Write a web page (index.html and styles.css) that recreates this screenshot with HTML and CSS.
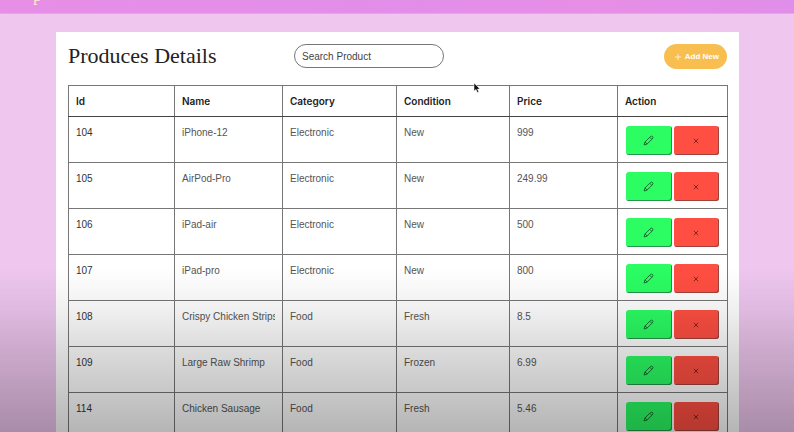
FILE: index.html
```html
<!DOCTYPE html>
<html lang="en">
<head>
    <meta charset="UTF-8">
    <meta name="viewport" content="width=device-width, initial-scale=1.0">
    <title>Produces Details</title>
    <link rel="stylesheet" href="styles.css">
</head>
<body>

    <!-- Icons used by the row buttons -->
    <svg class="sprite" aria-hidden="true">
        <symbol id="icon-pencil" viewBox="0 0 12 12">
            <path d="M1.2 10.9 L2 7.8 L7.9 1.9 Q9.2 0.6 10.4 1.7 Q11.4 2.9 10.2 4.2 L4.3 10 Z M2 7.8 Q3.7 8.1 4.3 10 M7.4 2.5 L9.6 4.7"/>
        </symbol>
        <symbol id="icon-cross" viewBox="0 0 6 6">
            <path d="M0.8 0.8 L5.2 5.2 M5.2 0.8 L0.8 5.2"/>
        </symbol>
    </svg>

    <header class="header">
        <a href="#" class="logo">p</a>
    </header>

    <main class="products">
        <div class="toolbar">
            <h1 class="title">Produces Details</h1>
            <input class="search" type="search" placeholder="Search Product" aria-label="Search Product">
            <button class="add-btn" type="button">
                <svg class="plus" viewBox="0 0 6 6" aria-hidden="true"><path d="M3 0 V6 M0 3 H6"/></svg>
                Add New
            </button>
        </div>

        <table class="product-table">
            <colgroup>
                <col class="col-id">
                <col class="col-name">
                <col class="col-category">
                <col class="col-condition">
                <col class="col-price">
                <col class="col-action">
            </colgroup>
            <thead>
                <tr>
                    <th>Id</th>
                    <th>Name</th>
                    <th>Category</th>
                    <th>Condition</th>
                    <th>Price</th>
                    <th>Action</th>
                </tr>
            </thead>
            <tbody id="product-rows"></tbody>
        </table>
    </main>

    <div class="shade"></div>

    <svg class="pointer" viewBox="0 0 8 12" aria-hidden="true">
        <path d="M1 1 V9 L3 7.4 L4.4 10.6 L5.8 10 L4.5 7 H7 Z"/>
    </svg>

    <script>
        const products = [
            { id: 104, name: "iPhone-12", category: "Electronic", condition: "New", price: 999 },
            { id: 105, name: "AirPod-Pro", category: "Electronic", condition: "New", price: 249.99 },
            { id: 106, name: "iPad-air", category: "Electronic", condition: "New", price: 500 },
            { id: 107, name: "iPad-pro", category: "Electronic", condition: "New", price: 800 },
            { id: 108, name: "Crispy Chicken Strips", category: "Food", condition: "Fresh", price: 8.5 },
            { id: 109, name: "Large Raw Shrimp", category: "Food", condition: "Frozen", price: 6.99 },
            { id: 114, name: "Chicken Sausage", category: "Food", condition: "Fresh", price: 5.46 }
        ];

        function loadProducts() {
            const rows = document.getElementById("product-rows");
            products.forEach((item) => {
                const row = document.createElement("tr");
                row.innerHTML = `
                    <td class="id">${item.id}</td>
                    <td><div class="clip">${item.name}</div></td>
                    <td>${item.category}</td>
                    <td>${item.condition}</td>
                    <td>${item.price}</td>
                    <td class="action">
                        <div class="actions">
                            <button class="btn edit" type="button" aria-label="Edit ${item.name}"><svg class="pencil"><use href="#icon-pencil"/></svg></button>
                            <button class="btn delete" type="button" aria-label="Delete ${item.name}"><svg class="cross"><use href="#icon-cross"/></svg></button>
                        </div>
                    </td>`;
                rows.appendChild(row);
            });
        }

        loadProducts();
    </script>

</body>
</html>
```
FILE: styles.css
```css
/* General Styles */
* {
    box-sizing: border-box;
}

body {
    margin: 0;
    height: 100vh;
    overflow: hidden;
    font-family: "Liberation Sans", Arial, sans-serif;
    font-size: 10px;
    line-height: 12px;
    color: #555;
    background: #eec6ee;
}

button, input {
    font: inherit;
}

.sprite {
    display: none;
}

/* Header */
.header {
    display: flex;
    align-items: flex-end;
    height: 14px;
    padding: 0 33px;
    overflow: hidden;
    background: linear-gradient(to right, #e78ee6, #e28eea 50%, #e78ee6 75%, #e08eea);
    border-bottom: 1px solid #e9a4e9;
}

.logo {
    margin-bottom: 9px;
    font-family: "Liberation Serif", serif;
    font-size: 18px;
    line-height: 18px;
    color: #fbe6cf;
    text-decoration: none;
}

/* Products Card */
.products {
    margin: 18px 55px 0 56px;
    padding: 12px 12px 40px;
    background: white;
}

.toolbar {
    display: grid;
    grid-template-columns: 226px 150px 1fr;
    align-items: start;
    height: 25px;
    margin-bottom: 16px;
}

.title {
    margin: 0;
    font-family: "Liberation Serif", serif;
    font-size: 22px;
    line-height: 24px;
    font-weight: normal;
    color: #222;
}

.search {
    width: 100%;
    height: 24px;
    padding: 0 7px;
    border: 1px solid #777;
    border-radius: 12px;
    background: white;
    appearance: none;
}

.search::placeholder {
    color: #444;
    opacity: 1;
}

.add-btn {
    display: flex;
    align-items: center;
    justify-self: end;
    gap: 4px;
    height: 25px;
    padding: 0 8px 0 11px;
    border: none;
    border-radius: 13px;
    font-size: 8px;
    font-weight: bold;
    color: white;
    background: #f8bf50;
    cursor: pointer;
}

.plus {
    width: 6px;
    height: 6px;
    stroke: white;
    stroke-width: 0.7;
}

/* Product Table */
.product-table {
    width: 100%;
    table-layout: fixed;
    border-collapse: collapse;
}

.col-id { width: 106px; }
.col-name { width: 108px; }
.col-category { width: 114px; }
.col-condition { width: 113px; }
.col-price { width: 108px; }
.col-action { width: 110px; }

.product-table th,
.product-table td {
    padding: 10px 7px;
    border: 1px solid #777;
    text-align: left;
    vertical-align: top;
}

.product-table th {
    height: 30px;
    padding: 9px 7px;
    border-bottom-color: #444;
    font-family: Inter, sans-serif;
    font-weight: 600;
    color: #222;
}

.product-table td {
    height: 46px;
}

.product-table .id {
    color: #333;
}

.product-table .action {
    padding: 9px 8px 7px;
}

.clip {
    overflow: hidden;
    white-space: nowrap;
}

/* Buttons */
.actions {
    display: grid;
    grid-template-columns: 1fr 1fr;
    gap: 2px;
}

.btn {
    display: flex;
    align-items: center;
    justify-content: center;
    height: 29px;
    padding: 0;
    border: none;
    border-radius: 3px;
    cursor: pointer;
}

.edit {
    background: #2bfd63;
    box-shadow: inset -1px -1px 0 #26964a;
}

.delete {
    background: #ff4f42;
    box-shadow: inset -1px -1px 0 #a0423c;
}

.pencil {
    width: 11px;
    height: 11px;
    fill: none;
    stroke: #17552a;
    stroke-width: 0.9;
}

.cross {
    width: 6px;
    height: 6px;
    stroke: #7c211b;
    stroke-width: 0.9;
}

/* Dark fade along the bottom of the window */
.shade {
    position: fixed;
    inset: auto 0 0;
    height: 38vh;
    background: linear-gradient(rgba(0, 0, 0, 0), rgba(0, 0, 0, 0.06) 25%, rgba(0, 0, 0, 0.14) 50%, rgba(0, 0, 0, 0.29));
    pointer-events: none;
}

.pointer {
    position: absolute;
    left: 473px;
    top: 82px;
    width: 8px;
    height: 12px;
    fill: #111;
    stroke: white;
    stroke-width: 0.5;
}
```
